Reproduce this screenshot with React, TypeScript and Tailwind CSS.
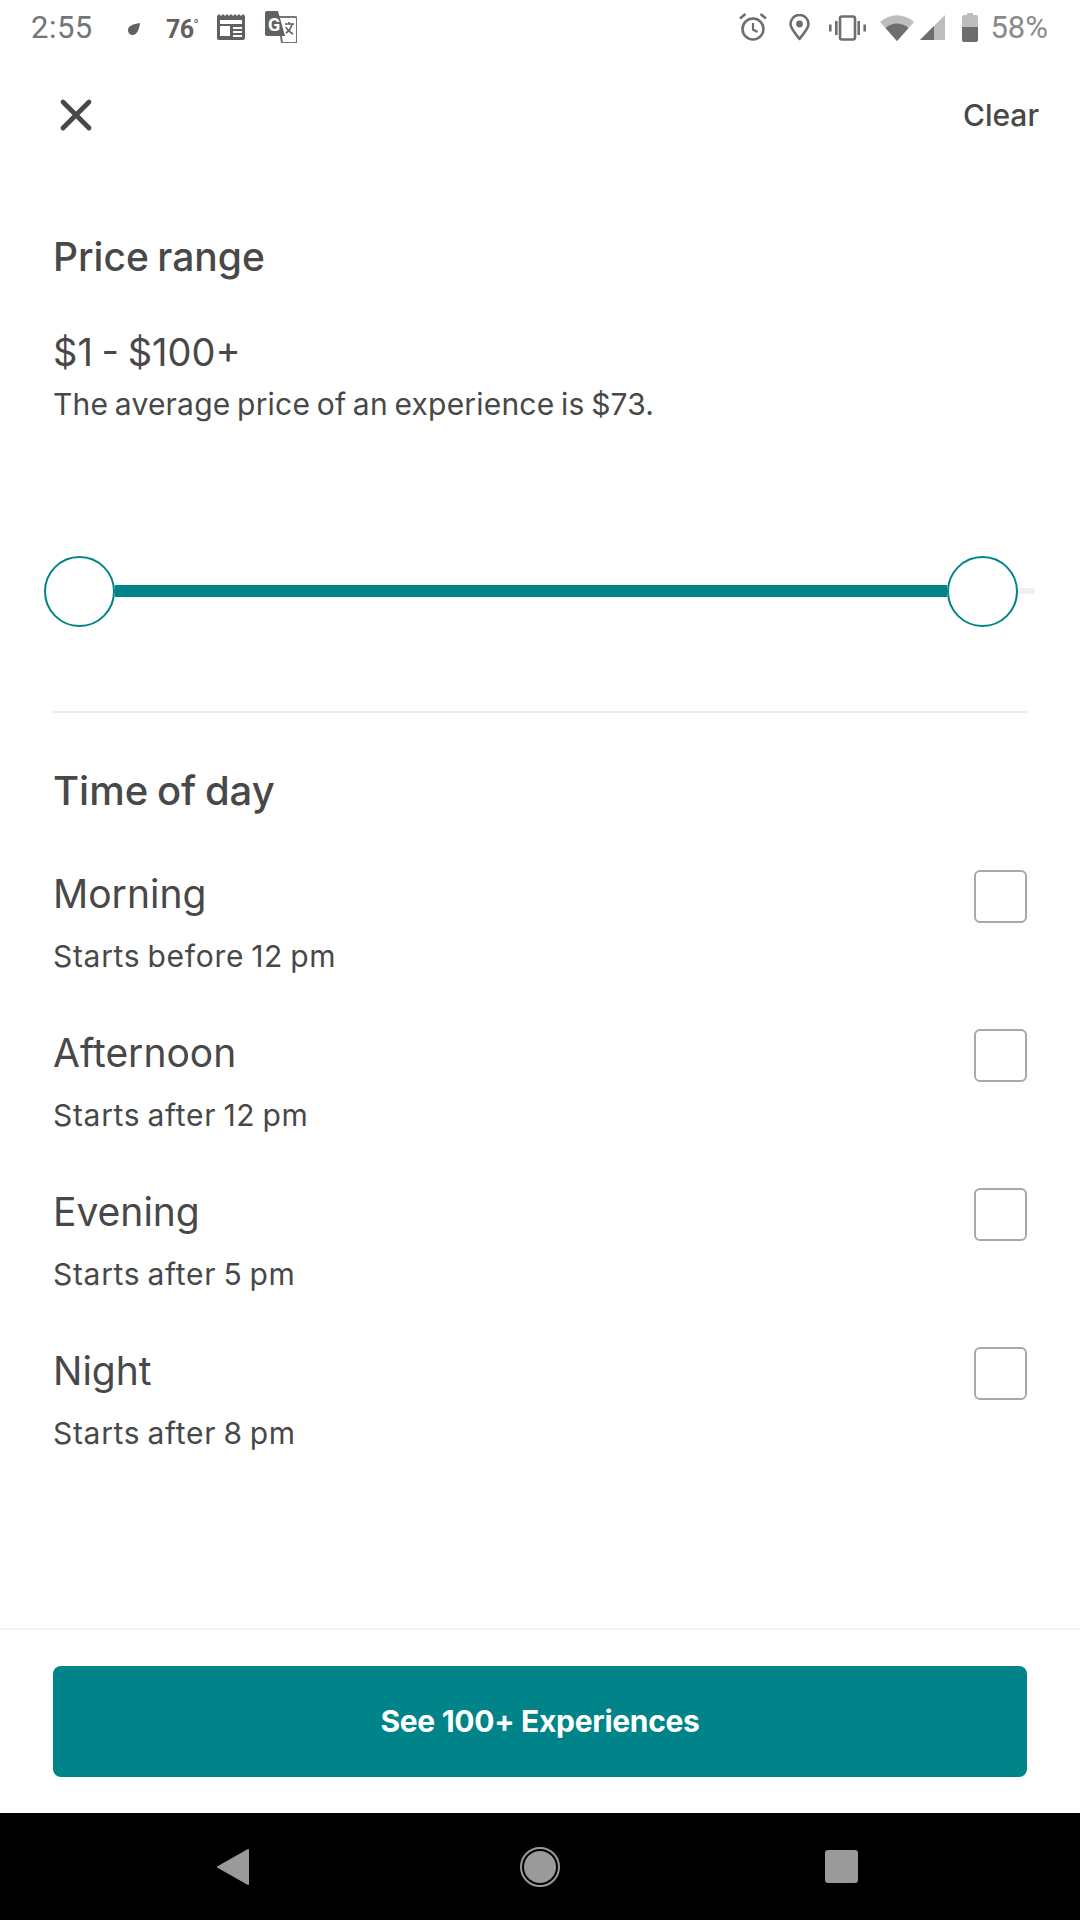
import { X } from "lucide-react";

const slots = [
  { name: "Morning", note: "Starts before 12 pm" },
  { name: "Afternoon", note: "Starts after 12 pm" },
  { name: "Evening", note: "Starts after 5 pm" },
  { name: "Night", note: "Starts after 8 pm" },
];

const StatusLeft = () => (
  <div className="flex items-center">
    <span className="w-[96px] pl-[31px] text-[31px] leading-[30px] tracking-[0.5px] text-[#757575] font-['Roboto',sans-serif]">2:55</span>
    <svg width="12" height="12" viewBox="0 0 12 12" className="ml-[32px] mt-[2px]">
      <path d="M12 0 C11 8 8 12 5 12 C2 12 0 10 0 7 C0 3 5 1 12 0Z" fill="#616161" />
    </svg>
    <span className="ml-[26px] w-[35px] text-[25px] leading-[30px] font-bold tracking-[-0.6px] text-[#616161] font-['Roboto',sans-serif]">
      76<span className="text-[14px] align-[8px] font-normal">°</span>
    </span>
    <svg width="28" height="26" viewBox="0 0 28 26" className="ml-[16px] -mt-[2px]">
      <path d="M0 2 L2 0 L4 2 L6 0 L8 2 L10 0 L12 2 L14 0 L16 2 L18 0 L20 2 L22 0 L24 2 L26 0 L28 2 V24 Q28 26 26 26 H2 Q0 26 0 24Z" fill="#616161" />
      <rect x="3" y="6" width="22" height="4" fill="#fff" />
      <rect x="3" y="12" width="10" height="10" fill="#fff" />
      <path d="M16 13h9v2h-9zM16 17h9v2h-9zM16 21h9v2h-9z" fill="#fff" />
    </svg>
    <svg width="32" height="32" viewBox="0 0 32 32" className="ml-[20px] -mt-[2px]">
      <path d="M13 6h17a2 2 0 0 1 2 2v22a2 2 0 0 1-2 2H17z" fill="#fff" stroke="#757575" strokeWidth="2" />
      <path d="M2 0h11l7 25H2a2 2 0 0 1-2-2V2a2 2 0 0 1 2-2z" fill="#616161" />
      <text x="3" y="20" fontSize="18" fontWeight="700" fill="#fff" fontFamily="Roboto, sans-serif">G</text>
      <path d="M20 13h9M24 11v2M27 13c-1 5-3 7-6 9M21 16c1 3 4 5 7 7" fill="none" stroke="#616161" strokeWidth="1.6" />
    </svg>
  </div>
);

const StatusRight = () => (
  <div className="flex items-center">
    <svg width="28" height="28" viewBox="0 0 28 28" className="mr-[22px] -mt-[1px]">
      <circle cx="14" cy="16" r="10.5" fill="none" stroke="#6e6e6e" strokeWidth="2.6" />
      <path d="M14 10v6.500l4.500 2.500" fill="none" stroke="#6e6e6e" strokeWidth="2.200" />
      <path d="M1 5.500L6.500 1M27 5.500L21.500 1" fill="none" stroke="#6e6e6e" strokeWidth="2.600" />
    </svg>
    <svg width="21" height="27" viewBox="0 0 21 27" className="mr-[19px] -mt-[1px]">
      <path d="M10.500 25 C6 19 1.500 14.500 1.500 10 A9 9 0 0 1 19.500 10 C19.500 14.500 15 19 10.500 25Z" fill="none" stroke="#6e6e6e" strokeWidth="2.600" strokeLinejoin="round" />
      <circle cx="10.500" cy="10" r="3.400" fill="#6e6e6e" />
    </svg>
    <svg width="37" height="26" viewBox="0 0 37 26" className="mr-[14px]">
      <rect x="11" y="1.500" width="15" height="23" rx="2" fill="none" stroke="#6e6e6e" strokeWidth="2.600" />
      <path d="M6 6h2.600v14H6zM28.400 6H31v14h-2.600zM0 9.500h2.600v7H0zM34.400 9.500H37v7h-2.600z" fill="#6e6e6e" />
    </svg>
    <svg width="34" height="26" viewBox="0 0 34 26" className="mr-[6px]">
      <path d="M0 7 C10 -2 24 -2 34 7 L17 26Z" fill="#bdbdbd" />
      <path d="M5.500 13 C12 7 22 7 28.500 13 L17 26Z" fill="#6e6e6e" />
    </svg>
    <svg width="25" height="25" viewBox="0 0 25 25" className="mr-[17px]">
      <path d="M25 0V25H0Z" fill="#bdbdbd" />
      <path d="M14 11V25H0Z" fill="#6e6e6e" />
    </svg>
    <svg width="16" height="29" viewBox="0 0 16 29" className="mr-[12px]">
      <path d="M5 0h6v2h3a2 2 0 0 1 2 2v11H0V4a2 2 0 0 1 2-2h3z" fill="#bdbdbd" />
      <path d="M0 14h16v13a2 2 0 0 1-2 2H2a2 2 0 0 1-2-2z" fill="#6e6e6e" />
    </svg>
    <span className="mr-[32px] text-[31px] leading-[30px] text-[#8a8a8a] font-['Roboto',sans-serif]">58%</span>
  </div>
);

const Thumb = () => <div className="w-[71px] h-[71px] shrink-0 rounded-full border-2 border-[#008489] bg-white" />;

export default function App() {
  return (
    <div className="w-[1080px] h-[1920px] flex flex-col bg-white text-[#484848] font-['Inter','Noto_Sans',sans-serif] [word-spacing:-2px]">
      <div className="h-[55px] flex items-center justify-between">
        <StatusLeft />
        <StatusRight />
      </div>

      <div className="h-[64px] mt-[28px] flex items-center justify-between pl-[50px] pr-[41px]">
        <X size={52} strokeWidth={2.2} className="text-[#484848]" />
        <span className="text-[30px] font-medium">Clear</span>
      </div>

      <div className="px-[53px] mt-[88px]">
        <h2 className="text-[39px] leading-[44px] font-medium">Price range</h2>
        <p className="mt-[51px] text-[38px] leading-[44px]">$1 - $100+</p>
        <p className="mt-[10px] text-[30px] leading-[40px] tracking-[0.2px]">The average price of an experience is $73.</p>
      </div>

      <div className="mt-[132px] pl-[44px] pr-[45px] flex items-center">
        <Thumb />
        <div className="flex-1 h-[12px] -mt-[1px] bg-[#008489]" />
        <Thumb />
        <div className="w-[17px] h-[6px] -mt-[1px] rounded-r-full bg-[#f0f0f0]" />
      </div>

      <div className="mx-[53px] mt-[84px] h-[2px] bg-[#ebebeb]" />

      <div className="px-[53px] mt-[56px] flex flex-col">
        <h2 className="text-[40px] leading-[44px] font-medium">Time of day</h2>
        <div className="mt-[58px] flex flex-col gap-[49px]">
          {slots.map((s) => (
            <div key={s.name} className="h-[110px] flex items-start justify-between">
              <div>
                <div className="text-[39px] leading-[46px]">{s.name}</div>
                <div className="mt-[19px] text-[30px] leading-[40px] tracking-[0.7px]">{s.note}</div>
              </div>
              <div className="-mt-[1px] w-[53px] h-[53px] rounded-[6px] border-2 border-[#a8a8a8]" />
            </div>
          ))}
        </div>
      </div>

      <div className="mt-auto border-t-2 border-[#f5f5f5] px-[53px] pt-[36px] pb-[36px]">
        <button className="w-full h-[111px] rounded-[8px] bg-[#008489] text-white text-[30px] font-bold tracking-[-0.3px]">
          See 100+ Experiences
        </button>
      </div>

      <div className="h-[107px] bg-black flex items-center justify-between pl-[217px] pr-[222px]">
        <svg width="32" height="36" viewBox="0 0 32 36">
          <path d="M31 1 L1 18 L31 35 Z" fill="#9a9a9a" stroke="#9a9a9a" strokeWidth="2" strokeLinejoin="round" />
        </svg>
        <svg width="40" height="40" viewBox="0 0 40 40" className="ml-[6px]">
          <circle cx="20" cy="20" r="19" fill="none" stroke="#9a9a9a" strokeWidth="2" />
          <circle cx="20" cy="20" r="16" fill="#9a9a9a" />
        </svg>
        <div className="w-[33px] h-[33px] rounded-[3px] bg-[#9a9a9a]" />
      </div>
    </div>
  );
}
